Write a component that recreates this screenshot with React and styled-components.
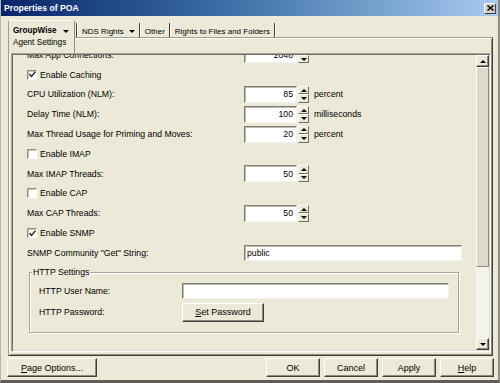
import React from "react";
import styled, { createGlobalStyle } from "styled-components";

const GlobalStyle = createGlobalStyle`
  html, body { margin: 0; padding: 0; }
  body {
    background: #ece9d8;
    font-family: "Liberation Sans", Arial, sans-serif;
  }
`;

const Window = styled.div`
  width: 500px;
  height: 383px;
  box-sizing: border-box;
  background: #ece9d8;
  border-left: 1px solid #b8b5a9;
  border-right: 2px solid #8e8b80;
  border-bottom: 3px solid #5f5d56;
  display: flex;
  flex-direction: column;
  font-size: 8.7px;
  color: #000;
  overflow: hidden;
`;

const TitleBar = styled.div`
  height: 16px;
  flex: none;
  margin-left: -1px;
  background: linear-gradient(to right, #0a246a 0%, #3a6ea5 45%, #a6caf0 100%);
  display: flex;
  align-items: center;
  justify-content: space-between;
  padding: 0 2px 0 4px;
`;

const Title = styled.span`
  color: #fff;
  font-weight: bold;
  font-size: 8.7px;
`;

const CloseButton = styled.div`
  width: 12px;
  height: 11px;
  box-sizing: border-box;
  background: #d4d0c8;
  border: 1px solid;
  border-color: #fff #404040 #404040 #fff;
  display: flex;
  align-items: center;
  justify-content: center;
`;

const Body = styled.div`
  flex: 1;
  display: flex;
  flex-direction: column;
  padding: 4px 5px 0 7px;
`;

const TabRow = styled.div`
  height: 17px;
  flex: none;
  display: flex;
  align-items: flex-start;
`;

const SelectedTab = styled.div`
  position: relative;
  z-index: 1;
  width: 67px;
  height: 33px;
  margin-bottom: -16px;
  box-sizing: border-box;
  background: #ece9d8;
  border-left: 1px solid #9f9c91;
  border-top: 1px solid #fbfaf6;
  border-right: 1px solid #8e8b80;
  padding: 4px 0 0 4px;
  line-height: 12px;
  font-size: 8.2px;
`;

const TabTitle = styled.div`
  display: flex;
  align-items: center;
  font-weight: ${(p) => (p.$bold ? "bold" : "normal")};
`;

const DownArrow = styled.span`
  width: 0;
  height: 0;
  margin-left: ${(p) => p.$gap || 6}px;
  border-left: 3px solid transparent;
  border-right: 3px solid transparent;
  border-top: 3px solid #000;
`;

const TabItem = styled.div`
  display: flex;
  align-items: center;
  height: 12px;
  margin-top: 5px;
  padding: 0 4px 0 4px;
  font-size: 8px;
  white-space: nowrap;
`;

const TabSeparator = styled.div`
  width: 1px;
  height: 15px;
  margin-top: 3px;
  background: #3f3e3a;
  border-right: 1px solid #fff;
  margin-left: ${(p) => p.$ml || 0}px;
`;

const Panel = styled.div`
  height: 319px;
  flex: none;
  box-sizing: border-box;
  border: 1px solid;
  border-color: #a09d92 #404040 #404040 #a09d92;
  box-shadow: inset 1px 1px #fdfcf8, inset -1px -1px #8e8b80;
  padding: 15px 1px 3px 2px;
  display: flex;
`;

const ScrollPane = styled.div`
  flex: 1;
  display: flex;
  box-sizing: border-box;
  border: 1px solid;
  border-color: #a7a499 #fff #fff #a7a499;
  box-shadow: inset 1px 1px #6f6d65, inset -1px -1px #dcd9cc;
  padding: 1px;
  overflow: hidden;
`;

const Content = styled.div`
  flex: 1;
  overflow: hidden;
  padding-left: 14px;
`;

const Scrolled = styled.div`
  margin-top: -10px;
`;

const Row = styled.div`
  display: flex;
  align-items: center;
  height: ${(p) => p.$h || 19.8}px;
  white-space: nowrap;
`;

const Label = styled.span`
  width: ${(p) => p.$w}px;
  flex: none;
`;

const NumberBox = styled.div`
  width: 53px;
  height: 17px;
  box-sizing: border-box;
  background: #fff;
  border: 1px solid;
  border-color: #7f7d73 #f4f3ee #f4f3ee #7f7d73;
  box-shadow: inset 1px 1px #bcb9ad;
  display: flex;
  align-items: center;
  justify-content: flex-end;
  padding-right: 3px;
`;

const Spin = styled.div`
  width: 11px;
  height: 17px;
  margin-left: 1px;
  display: flex;
  flex-direction: column;
`;

const SpinButton = styled.div`
  flex: 1;
  box-sizing: border-box;
  background: #ece9d8;
  border: 1px solid;
  border-color: #fff #6f6d65 #6f6d65 #fff;
  display: flex;
  align-items: center;
  justify-content: center;
  &::after {
    content: "";
    width: 0;
    height: 0;
    border-left: 3px solid transparent;
    border-right: 3px solid transparent;
    ${(p) => (p.$down ? "border-top: 3px solid #000;" : "border-bottom: 3px solid #000;")}
  }
`;

const Unit = styled.span`
  margin-left: 5px;
`;

const TextBox = styled.div`
  width: ${(p) => p.$w}px;
  height: 16px;
  box-sizing: border-box;
  background: #fff;
  border: 1px solid;
  border-color: #7f7d73 #f4f3ee #f4f3ee #7f7d73;
  box-shadow: inset 1px 1px #bcb9ad;
  padding-left: 2px;
  display: flex;
  align-items: center;
`;

const CheckBox = styled.div`
  width: 10px;
  height: 10px;
  box-sizing: border-box;
  background: #fff;
  border: 1px solid;
  border-color: #8e8b80 #fff #fff #8e8b80;
  box-shadow: inset 1px 1px #c7c4b8;
  margin-right: 3px;
  display: flex;
  align-items: center;
  justify-content: center;
`;

const Group = styled.fieldset`
  width: 430px;
  box-sizing: border-box;
  margin: 4px 0 0 2px;
  min-inline-size: 0;
  padding: 0 0 9px 2px;
  border: 1px solid #a7a499;
  box-shadow: inset 1px 1px #fff, 1px 1px #fff;
`;

const Legend = styled.legend`
  padding: 0 1px;
  line-height: 11px;
`;

const GroupRows = styled.div`
  padding: 3px 0 0 7px;
`;

const Button = styled.div`
  width: ${(p) => p.$w || 54}px;
  height: 19px;
  box-sizing: border-box;
  background: #ece9d8;
  border: 1px solid;
  border-color: #fff #404040 #404040 #fff;
  box-shadow: inset -1px -1px #8e8b80;
  display: flex;
  align-items: center;
  justify-content: center;
  font-size: 9px;
  flex: none;
`;

const Mnemonic = styled.span`
  text-decoration: underline;
`;

const ScrollBar = styled.div`
  width: 13px;
  display: flex;
  flex-direction: column;
  background: #f3f2ec;
`;

const ScrollButton = styled(SpinButton)`
  flex: none;
  height: 12px;
  border-color: #fff #404040 #404040 #fff;
  box-shadow: inset -1px -1px #8e8b80;
`;

const Thumb = styled.div`
  height: 200px;
  box-sizing: border-box;
  background: #ddd9cb;
  border: 1px solid;
  border-color: #fff #8e8b80 #8e8b80 #fff;
`;

const Track = styled.div`
  flex: 1;
`;

const ButtonRow = styled.div`
  display: flex;
  gap: 4px;
  margin: 2px -1px 0 -1px;
`;

const Spacer = styled.div`
  flex: 1;
`;

const fields = [
  { type: "spin", label: "Max App Connections:", value: "2048" },
  { type: "check", label: "Enable Caching", checked: true },
  { type: "spin", label: "CPU Utilization (NLM):", value: "85", unit: "percent" },
  { type: "spin", label: "Delay Time (NLM):", value: "100", unit: "milliseconds" },
  { type: "spin", label: "Max Thread Usage for Priming and Moves:", value: "20", unit: "percent" },
  { type: "check", label: "Enable IMAP" },
  { type: "spin", label: "Max IMAP Threads:", value: "50" },
  { type: "check", label: "Enable CAP" },
  { type: "spin", label: "Max CAP Threads:", value: "50" },
  { type: "check", label: "Enable SNMP", checked: true },
  { type: "text", label: 'SNMP Community "Get" String:', value: "public" },
];

function Field({ field }) {
  if (field.type === "check") {
    return (
      <Row>
        <CheckBox>
          {field.checked && (
            <svg width="7" height="7" viewBox="0 0 7 7">
              <polyline points="0.5,3 2.5,5.5 6.5,0.8" fill="none" stroke="#222" strokeWidth="1.4" />
            </svg>
          )}
        </CheckBox>
        {field.label}
      </Row>
    );
  }
  if (field.type === "text") {
    return (
      <Row>
        <Label $w={217}>{field.label}</Label>
        <TextBox $w={218}>{field.value}</TextBox>
      </Row>
    );
  }
  return (
    <Row>
      <Label $w={217}>{field.label}</Label>
      <NumberBox>{field.value}</NumberBox>
      <Spin>
        <SpinButton />
        <SpinButton $down />
      </Spin>
      {field.unit && <Unit>{field.unit}</Unit>}
    </Row>
  );
}

export default function App() {
  return (
    <>
      <GlobalStyle />
      <Window>
        <TitleBar>
          <Title>Properties of POA</Title>
          <CloseButton>
            <svg width="7" height="6" viewBox="0 0 7 6">
              <path d="M0.5 0.5 L6.5 5.5 M6.5 0.5 L0.5 5.5" stroke="#000" strokeWidth="1.5" />
            </svg>
          </CloseButton>
        </TitleBar>
        <Body>
          <TabRow>
            <SelectedTab>
              <TabTitle $bold>
                GroupWise
                <DownArrow />
              </TabTitle>
              <TabTitle>Agent Settings</TabTitle>
            </SelectedTab>
            <TabSeparator $ml={1} />
            <TabItem>
              NDS Rights
              <DownArrow $gap={5} />
            </TabItem>
            <TabSeparator />
            <TabItem>Other</TabItem>
            <TabSeparator />
            <TabItem>Rights to Files and Folders</TabItem>
            <TabSeparator />
          </TabRow>
          <Panel>
            <ScrollPane>
              <Content>
                <Scrolled>
                  {fields.map((f) => (
                    <Field key={f.label} field={f} />
                  ))}
                  <Group>
                    <Legend>HTTP Settings</Legend>
                    <GroupRows>
                      <Row $h={21}>
                        <Label $w={143}>HTTP User Name:</Label>
                        <TextBox $w={267} />
                      </Row>
                      <Row $h={21}>
                        <Label $w={143}>HTTP Password:</Label>
                        <Button $w={82}>
                          <Mnemonic>S</Mnemonic>et Password
                        </Button>
                      </Row>
                    </GroupRows>
                  </Group>
                </Scrolled>
              </Content>
              <ScrollBar>
                <ScrollButton />
                <Thumb />
                <Track />
                <ScrollButton $down />
              </ScrollBar>
            </ScrollPane>
          </Panel>
          <ButtonRow>
            <Button $w={90}>
              <Mnemonic>P</Mnemonic>age Options...
            </Button>
            <Spacer />
            <Button>OK</Button>
            <Button>Cancel</Button>
            <Button>Apply</Button>
            <Button>
              <Mnemonic>H</Mnemonic>elp
            </Button>
          </ButtonRow>
        </Body>
      </Window>
    </>
  );
}
